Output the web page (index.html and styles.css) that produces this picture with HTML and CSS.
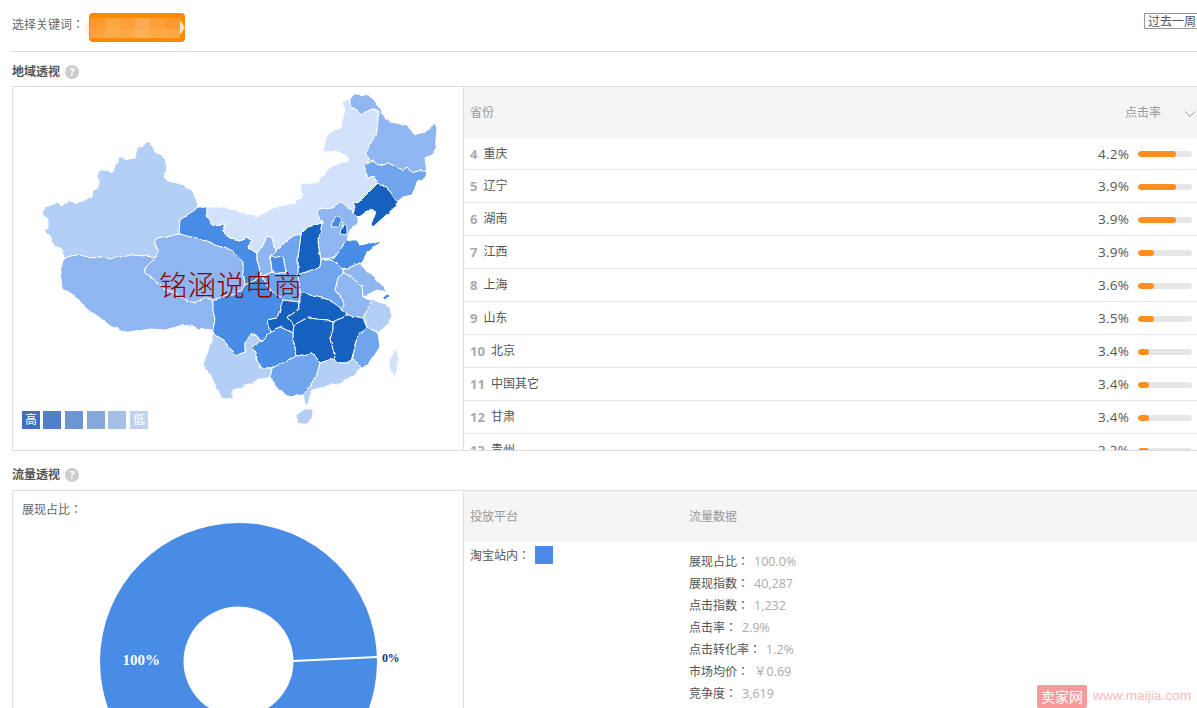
FILE: index.html
```html
<!DOCTYPE html>
<html>
<head>
<meta charset="utf-8">
<title>地域透视</title>
<link rel="stylesheet" href="styles.css">
</head>
<body>
<div class="page">
  <header class="topbar">
    <span class="kw-label">选择关键词：</span>
    <div class="chip">
      <span class="chip-tab"></span>
      <div class="mosaic"><i></i><i></i><i></i><i></i><i></i><i></i><i></i><i></i><i></i><i></i><i></i><i></i></div>
      <span class="chip-arrow"></span>
    </div>
    <span class="period">过去一周</span>
  </header>

  <h2 class="section first"><span>地域透视</span><b class="help">?</b></h2>
  <section class="panel panel-geo">
    <div class="map-cell">
      <svg class="map" viewBox="13 87 450 363" width="450" height="363">
        <defs>
          <filter id="wiggle" x="0" y="0" width="100%" height="100%">
            <feTurbulence type="fractalNoise" baseFrequency="0.14" numOctaves="2" seed="4"/>
            <feDisplacementMap in="SourceGraphic" scale="3.5" xChannelSelector="R" yChannelSelector="G"/>
          </filter>
        </defs>
        <g stroke="#fff" stroke-width="1" stroke-linejoin="round" filter="url(#wiggle)">
          <path class="c-l" d="M146 142L150 142L155 152L162 155L167 165L164 177L168 181L182 184L193 192L199 207L190 213L180 220L179 234L155 240L155 247L160 251L156 257L133 255L120 257L110 259L100 257L90 258L78 254L64 258L63 251L52 244L51 237L44 230L48 228L48 220L42 215L45 207L57 203L62 206L68 201L75 203L92 197L93 190L98 188L98 171L107 170L113 172L119 156L128 159L135 158L137 148L142 147Z"/>
          <path class="c-m" d="M64 258L78 254L90 258L100 257L110 259L120 257L133 255L156 257L145 268L145 273L160 285L173 293L187 300L195 303L205 297L213 300L213 310L215 320L213 329L197 330L192 325L180 326L165 330L150 329L130 333L112 327L100 318L88 310L75 296L62 288L60 270Z"/>
          <path class="c-m" d="M155 240L179 234L205 240L215 245L232 250L243 263L243 270L245 285L240 292L213 300L205 297L195 303L187 300L173 293L160 285L145 273L145 268L156 257L160 251L155 247Z"/>
          <path class="c-b" d="M180 220L190 213L199 207L207 207L207 217L212 225L225 224L222 232L230 238L240 240L247 237L252 240L248 248L257 253L257 260L262 276L245 285L243 270L243 263L232 250L215 245L205 240L179 234Z"/>
          <path class="c-p" d="M207 207L223 207L240 212L247 213L257 217L273 208L293 203L302 197L300 185L317 182L330 167L348 160L348 157L337 151L323 152L327 135L340 128L345 110L342 102L348 98L350 105L357 110L360 115L372 109L379 112L377 130L373 140L365 152L370 160L364 165L368 178L373 176L378 183L358 203L353 202L355 207L353 213L352 210L340 201L337 205L325 210L322 207L318 212L322 223L308 227L301 234L293 236L275 251L272 238L268 236L263 245L257 253L248 248L252 240L247 237L240 240L230 238L222 232L225 224L212 225L207 217Z"/>
          <path class="c-m" d="M350 98L355 94L370 95L378 105L383 116L390 122L407 125L415 135L427 130L435 123L437 128L435 153L425 158L427 173L420 170L412 173L407 167L403 170L390 164L378 165L373 161L364 165L370 160L365 152L373 140L377 130L379 112L372 109L360 115L357 110L350 105Z"/>
          <path class="c-s" d="M364 165L373 161L378 165L390 164L403 170L407 167L412 173L420 170L427 173L423 180L417 183L412 195L403 197L397 202L387 187L381 186L378 183L373 176L368 178Z"/>
          <path class="c-d" d="M381 186L387 187L397 202L395 207L373 227L372 222L376 212L370 209L358 218L353 213L355 207L353 202L358 203L378 183Z"/>
          <path class="c-m" d="M322 223L318 212L322 207L325 210L337 205L340 201L352 210L353 213L358 218L358 223L350 230L347 240L335 257L321 260L318 243Z"/>
          <path class="c-b" d="M337 216L342 220L338 227L331 227L332 222Z"/>
          <path class="c-d" d="M343 222L347 227L347 235L341 234L342 228Z"/>
          <path class="c-d" d="M298 257L301 234L308 227L322 223L318 243L321 260L320 267L298 275Z"/>
          <path class="c-b" d="M335 257L347 240L357 240L360 245L370 243L382 241L377 245L367 253L363 260L360 263L343 270L333 260L321 260Z"/>
          <path class="c-s" d="M298 275L320 267L321 260L333 260L343 270L343 272L338 278L335 290L343 300L343 310L330 300L317 297L300 292Z"/>
          <path class="c-s" d="M275 251L293 236L301 234L298 257L298 275L300 292L300 302L283 300L270 290L262 276L272 272L286 273L283 257L270 256Z"/>
          <path class="c-b" d="M270 256L283 257L286 273L272 272Z"/>
          <path class="c-m" d="M248 248L257 253L263 245L268 236L272 238L275 251L270 256L272 272L262 276L257 260L257 253Z"/>
          <path class="c-m" d="M343 270L360 263L363 267L380 283L387 292L377 290L363 297L362 285L357 282L343 272Z"/>
          <path class="c-b" d="M383 297L388 293L390 296L386 300Z"/>
          <path class="c-m" d="M338 278L343 272L357 282L362 285L363 297L372 300L363 318L347 315L343 310L343 300L335 290Z"/>
          <path class="c-l" d="M363 318L372 300L390 307L392 317L380 333L367 328Z"/>
          <path class="c-s" d="M367 328L378 333L380 347L368 365L362 367L352 358L357 337Z"/>
          <path class="c-b" d="M213 300L240 292L245 285L262 276L270 290L283 300L280 310L277 318L267 320L270 332L263 340L252 333L245 343L245 352L237 356L223 340L213 333L213 329L215 320L213 310Z"/>
          <path class="c-d" d="M283 300L300 302L298 310L288 317L294 325L293 333L280 327L270 332L267 320L277 318L280 310Z"/>
          <path class="c-d" d="M300 292L317 297L330 300L343 310L347 315L333 322L327 320L307 318L294 325L288 317L298 310L300 302Z"/>
          <path class="c-d" d="M294 325L307 318L327 320L333 322L333 330L330 338L335 358L320 363L313 353L297 356L293 340L293 333Z"/>
          <path class="c-d" d="M333 322L347 315L363 318L367 328L357 337L352 358L348 363L340 363L335 358L330 338L333 330Z"/>
          <path class="c-b" d="M252 347L263 340L270 332L280 327L293 333L293 340L297 356L272 368L260 368L255 352Z"/>
          <path class="c-s" d="M270 377L272 368L297 356L313 353L320 363L317 373L310 387L303 395L287 396L277 387Z"/>
          <path class="c-l" d="M362 367L352 358L348 363L340 363L335 358L320 363L317 373L310 387L303 395L305 403L308 405L310 397L313 390L330 385L343 383L353 375Z"/>
          <path class="c-l" d="M213 333L223 340L237 356L245 352L245 343L252 333L263 340L252 347L255 352L260 368L272 368L270 377L258 380L243 387L233 390L233 400L222 397L215 387L210 373L202 367L208 350Z"/>
          <path class="c-l" d="M296 415L303 410L314 408L312 418L305 425L298 424Z"/>
          <path class="c-p" d="M396 349L399 354L397 368L395 377L390 370L389 360Z"/>
        </g>
      </svg>
      <ul class="legend">
        <li class="lg1">高</li><li class="lg2"></li><li class="lg3"></li><li class="lg4"></li><li class="lg5"></li><li class="lg6">低</li>
      </ul>
      <span class="stamp">铭涵说电商</span>
    </div>
    <div class="table">
      <div class="thead">
        <span>省份</span>
        <span class="sort">点击率</span>
        <svg class="chev" viewBox="0 0 12 8" width="12" height="8"><path d="M1 1.5L6 6.5L11 1.5" fill="none" stroke="#999" stroke-width="1"/></svg>
      </div>
      <div class="row"><b>4</b><span class="name">重庆</span><span class="val">4.2%</span><span class="bar"><i class="w38"></i></span></div>
      <div class="row"><b>5</b><span class="name">辽宁</span><span class="val">3.9%</span><span class="bar"><i class="w38"></i></span></div>
      <div class="row"><b>6</b><span class="name">湖南</span><span class="val">3.9%</span><span class="bar"><i class="w38"></i></span></div>
      <div class="row"><b>7</b><span class="name">江西</span><span class="val">3.9%</span><span class="bar"><i class="w16"></i></span></div>
      <div class="row"><b>8</b><span class="name">上海</span><span class="val">3.6%</span><span class="bar"><i class="w16"></i></span></div>
      <div class="row"><b>9</b><span class="name">山东</span><span class="val">3.5%</span><span class="bar"><i class="w16"></i></span></div>
      <div class="row"><b>10</b><span class="name">北京</span><span class="val">3.4%</span><span class="bar"><i class="w11"></i></span></div>
      <div class="row"><b>11</b><span class="name">中国其它</span><span class="val">3.4%</span><span class="bar"><i class="w11"></i></span></div>
      <div class="row"><b>12</b><span class="name">甘肃</span><span class="val">3.4%</span><span class="bar"><i class="w11"></i></span></div>
      <div class="row"><b>13</b><span class="name">贵州</span><span class="val">3.3%</span><span class="bar"><i class="w11"></i></span></div>
    </div>
  </section>

  <h2 class="section second"><span>流量透视</span><b class="help">?</b></h2>
  <section class="panel panel-flow">
    <div class="pie-cell">
      <div class="pie-title">展现占比：</div>
      <svg class="pie" viewBox="0 0 290 200" width="290" height="200">
        <circle cx="142.5" cy="144.5" r="138.5" fill="#488ce6"/>
        <circle cx="142.5" cy="144.5" r="55" fill="#fff"/>
        <path d="M197 144L281 140" stroke="#fff" stroke-width="2"/>
        <text class="pct-in" x="26.5" y="148">100%</text>
        <text class="pct-out" x="286" y="145">0%</text>
      </svg>
    </div>
    <div class="flow">
      <div class="thead flow-head"><span class="col-a">投放平台</span><span>流量数据</span></div>
      <div class="flow-body">
        <div class="col-a platform"><span>淘宝站内：</span><i class="swatch"></i></div>
        <ul class="stats">
          <li>展现占比：<em>100.0%</em></li>
          <li>展现指数：<em>40,287</em></li>
          <li>点击指数：<em>1,232</em></li>
          <li>点击率：<em>2.9%</em></li>
          <li>点击转化率：<em>1.2%</em></li>
          <li>市场均价：<em>￥0.69</em></li>
          <li>竞争度：<em>3,619</em></li>
        </ul>
      </div>
    </div>
  </section>

  <div class="brand"><span class="brand-badge">卖家网</span><span class="brand-url">www.maijia.com</span></div>
</div>
</body>
</html>
```
FILE: styles.css
```css
* { box-sizing: border-box; }
html, body { margin: 0; padding: 0; background: #fff; }
body {
  width: 1197px; height: 708px; overflow: hidden;
  font: 12px/1.4 "Open Sans", "Noto Sans CJK JP", sans-serif;
  color: #555;
}
.page { position: relative; width: 1197px; height: 708px; overflow: hidden; display: flex; flex-direction: column; }

.topbar {
  flex: none; height: 52px; margin-left: 12px; padding-bottom: 1px;
  border-bottom: 1px solid #dedede;
  display: flex; align-items: flex-start;
}
.kw-label { width: 77px; margin-top: 16px; line-height: 18px; color: #666; }
.chip { position: relative; width: 96px; height: 29px; margin-top: 13px; background: #ff8a00; border-radius: 4px; padding: 5px 5px 4px 1px; }
.chip-tab { position: absolute; left: -6px; top: 6px; width: 6px; height: 17px; background: #fdf1e5; clip-path: polygon(100% 0, 100% 100%, 0 50%); }
.chip-arrow { position: absolute; right: 0; top: 7px; width: 5px; height: 15px; background: #fde3c3; clip-path: polygon(0 0, 100% 50%, 0 100%); }
.mosaic { height: 20px; display: grid; grid-template-columns: repeat(6, 15px); grid-template-rows: 11px 9px; }
.mosaic i:nth-child(1) { background: #fd9a2d; }
.mosaic i:nth-child(2) { background: #fea744; }
.mosaic i:nth-child(3) { background: #fea03a; }
.mosaic i:nth-child(4) { background: #fdab52; }
.mosaic i:nth-child(5) { background: #fea13c; }
.mosaic i:nth-child(6) { background: #fd9a2d; }
.mosaic i:nth-child(7) { background: #fea33c; }
.mosaic i:nth-child(8) { background: #feab4c; }
.mosaic i:nth-child(9) { background: #fea744; }
.mosaic i:nth-child(10) { background: #feb056; }
.mosaic i:nth-child(11) { background: #ffa946; }
.mosaic i:nth-child(12) { background: #fea744; }
.period {
  margin-left: auto; margin-top: 13px; width: 53px; height: 16px;
  border: 1px solid #999; border-right: 0; padding-left: 3px;
  line-height: 15px; color: #555; white-space: nowrap;
}

.section { margin: 0 0 0 12px; display: flex; align-items: center; gap: 5px; font-size: 12px; font-weight: 700; color: #555; flex: none; }
.section.first { height: 34px; padding-top: 6px; }
.section.second { height: 39px; padding-top: 9px; }
.help { width: 14px; height: 14px; border-radius: 50%; background: #ccc; color: #fff; font: 700 11px/14px "Open Sans", sans-serif; text-align: center; }

.panel { flex: none; margin-left: 12px; border: 1px solid #dedede; border-right: 0; display: grid; grid-template-columns: 451px 1fr; overflow: hidden; }
.panel-geo { height: 365px; }
.panel-flow { height: 230px; border-bottom: 0; }

.map-cell { position: relative; border-right: 1px solid #dedede; }
.map { display: block; }
.c-p { fill: #d2e2fa; }
.c-l { fill: #b3cff5; }
.c-m { fill: #8fb6f0; }
.c-s { fill: #6ea5ec; }
.c-b { fill: #488ce6; }
.c-d { fill: #1560c0; }
.legend { position: absolute; left: 9px; top: 324px; margin: 0; padding: 0; list-style: none; display: flex; gap: 3px; }
.legend li { width: 18px; height: 18px; color: #fff; text-align: center; line-height: 18px; font-size: 12px; }
.lg1 { background: #3a72c0; }
.lg2 { background: #5080c8; margin-right: 1px; }
.lg3 { background: #6c96d0; margin-right: 1px; }
.lg4 { background: #86a8da; }
.lg5 { background: #a4bfe5; margin-right: 1px; }
.lg6 { background: #bed2f0; }
.stamp { position: absolute; left: 146px; top: 177px; font-family: "Noto Sans CJK SC", sans-serif; font-size: 28.6px; font-weight: 300; line-height: 40px; color: #8b0000; white-space: nowrap; }

.thead { height: 51px; padding-top: 1px; background: #f5f5f5; color: #999; display: flex; align-items: center; padding-left: 6px; }
.table { overflow: hidden; }
.sort { margin-left: auto; margin-right: 23px; }
.chev { margin-right: 1px; margin-top: 1px; }
.row { height: 33px; padding: 1px 5px 0 6px; border-bottom: 1px solid #e8e8e8; display: flex; align-items: center; gap: 6px; color: #555; }
.thead + .row { height: 32px; }
.row b { color: #aaa; font-size: 13px; }
.val { margin-left: auto; margin-right: 3px; font-size: 13.5px; letter-spacing: .2px; color: #555; }
.bar { width: 54px; height: 6px; border-radius: 3px; background: #e6e6e6; overflow: hidden; }
.bar i { display: block; height: 6px; border-radius: 3px; background: #ff8f1f; }
.w38 { width: 38px; }
.w16 { width: 16px; }
.w11 { width: 11px; }

.pie-cell { border-right: 1px solid #dedede; }
.pie-title { padding: 10px 0 0 9px; line-height: 18px; color: #666; }
.pie { display: block; margin: -2px 0 0 83px; overflow: visible; }
.pct-in { font: 700 15px "Liberation Serif", serif; fill: #fff; }
.pct-out { font: 700 12px "Liberation Serif", serif; fill: #123a7a; letter-spacing: -.6px; }

.flow-head .col-a { width: 219px; }
.flow-body { display: flex; padding-left: 6px; }
.flow-body .col-a { width: 219px; }
.platform { display: flex; align-items: flex-start; padding-top: 4px; }
.platform span { line-height: 20px; margin-right: 5px; }
.swatch { width: 18px; height: 18px; background: #488ce6; }
.stats { list-style: none; margin: 0; padding: 9px 0 0; }
.stats li { height: 22px; line-height: 22px; color: #555; }
.stats em { font-style: normal; color: #aaa; margin-left: 5px; font-size: 12.5px; }

.brand { position: absolute; left: 1037px; top: 685px; display: flex; align-items: flex-start; gap: 6px; height: 23px; }
.brand-badge { width: 50px; height: 23px; background: #f89a9a; border-radius: 2px; color: #fff; text-align: center; font: 14px/23px "Noto Sans CJK SC", sans-serif; }
.brand-url { color: #fbb9b9; font: 13.7px/21px "Liberation Sans", sans-serif; }
```
